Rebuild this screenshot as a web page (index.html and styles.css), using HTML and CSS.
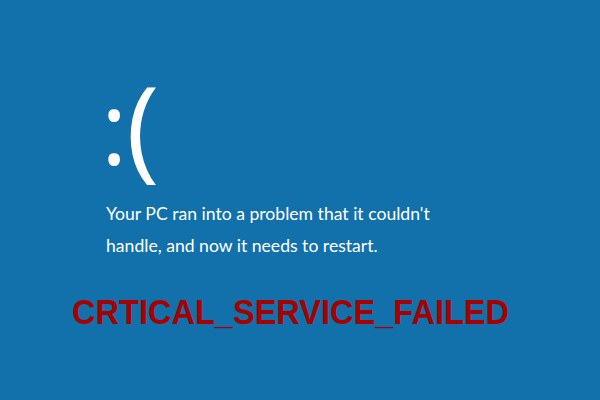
FILE: index.html
```html
<!DOCTYPE html>
<html>
<head><meta charset="utf-8"><link rel="stylesheet" href="styles.css"></head>
<body>
<div class="screen">
  <div class="face"><span class="colon">:</span><span class="paren">(</span></div>
  <p class="msg">Your PC ran into a problem that it couldn't<br>handle, and now it needs to restart.</p>
  <div class="code">CRTICAL_SERVICE_FAILED</div>
</div>
</body>
</html>
```
FILE: styles.css
```css
html, body { margin: 0; padding: 0; }
body { width: 600px; height: 400px; background: #1271ab; overflow: hidden; }
.screen { display: flex; flex-direction: column; padding: 74px 0 0 101px; }
.face { height: 120px; font-family: "Open Sans", sans-serif; font-weight: 400; color: #fff; line-height: 100px; white-space: nowrap; }
.colon { font-size: 100px; }
.paren { font-size: 112px; margin-left: -1px; vertical-align: -2px; }
.msg { margin: 4px 0 0 5px; font-family: Lato, sans-serif; font-size: 17.6px; line-height: 32px; color: #fff; }
.code { margin: 30px 0 0 -29px; font-family: "Liberation Sans", Arial, sans-serif; font-weight: bold; font-size: 35px; line-height: 40px; color: #a60000; transform: scaleX(0.93); transform-origin: left center; }
```
